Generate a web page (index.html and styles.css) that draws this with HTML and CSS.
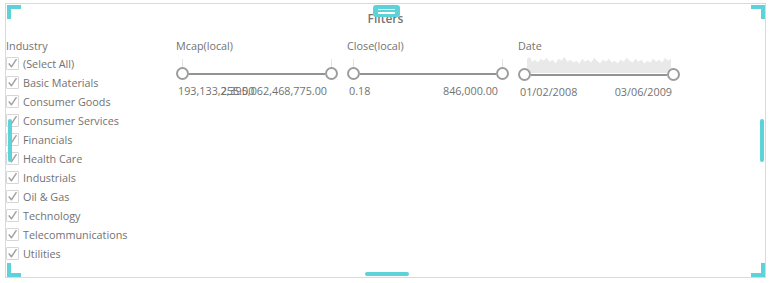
FILE: index.html
```html
<!DOCTYPE html>
<html lang="en">
  <head>
    <meta charset="UTF-8" />
    <meta name="viewport" content="width=device-width, initial-scale=1.0" />
    <title>Filters</title>
    <link rel="stylesheet" href="styles.css">
  </head>

  <body>
    <div class="widget">
      <div class="title">Filters</div>

      <div class="filters">
        <div class="list">
          <div class="list-label">Industry</div>
          <div class="item"><span class="check"><svg viewBox="0 0 13 13"><path d="M2.6 7 L5.2 10.4 L10.8 2" /></svg></span>(Select All)</div>
          <div class="item"><span class="check"><svg viewBox="0 0 13 13"><path d="M2.6 7 L5.2 10.4 L10.8 2" /></svg></span>Basic Materials</div>
          <div class="item"><span class="check"><svg viewBox="0 0 13 13"><path d="M2.6 7 L5.2 10.4 L10.8 2" /></svg></span>Consumer Goods</div>
          <div class="item"><span class="check"><svg viewBox="0 0 13 13"><path d="M2.6 7 L5.2 10.4 L10.8 2" /></svg></span>Consumer Services</div>
          <div class="item"><span class="check"><svg viewBox="0 0 13 13"><path d="M2.6 7 L5.2 10.4 L10.8 2" /></svg></span>Financials</div>
          <div class="item"><span class="check"><svg viewBox="0 0 13 13"><path d="M2.6 7 L5.2 10.4 L10.8 2" /></svg></span>Health Care</div>
          <div class="item"><span class="check"><svg viewBox="0 0 13 13"><path d="M2.6 7 L5.2 10.4 L10.8 2" /></svg></span>Industrials</div>
          <div class="item"><span class="check"><svg viewBox="0 0 13 13"><path d="M2.6 7 L5.2 10.4 L10.8 2" /></svg></span>Oil &amp; Gas</div>
          <div class="item"><span class="check"><svg viewBox="0 0 13 13"><path d="M2.6 7 L5.2 10.4 L10.8 2" /></svg></span>Technology</div>
          <div class="item"><span class="check"><svg viewBox="0 0 13 13"><path d="M2.6 7 L5.2 10.4 L10.8 2" /></svg></span>Telecommunications</div>
          <div class="item"><span class="check"><svg viewBox="0 0 13 13"><path d="M2.6 7 L5.2 10.4 L10.8 2" /></svg></span>Utilities</div>
        </div>

        <div class="range">
          <div class="range-label">Mcap(local)</div>
          <div class="spark ticks"><span class="tick"></span><span class="tick"></span></div>
          <div class="track"><span class="knob"></span><span class="line"></span><span class="knob"></span></div>
          <div class="values"><span class="lo">193,133,255.00</span><span class="hi">2,395,062,468,775.00</span></div>
        </div>

        <div class="range">
          <div class="range-label">Close(local)</div>
          <div class="spark ticks"><span class="tick"></span><span class="tick"></span></div>
          <div class="track"><span class="knob"></span><span class="line"></span><span class="knob"></span></div>
          <div class="values"><span class="lo">0.18</span><span class="hi">846,000.00</span></div>
        </div>

        <div class="range">
          <div class="range-label">Date</div>
          <div class="spark">
            <svg class="area" viewBox="0 0 146 19" preserveAspectRatio="none">
              <polygon points="0,19 0,4 3,2 5,7 8,5 11,8 14,4 17,6 20,3 23,7 26,5 29,9 32,4 35,6 38,2 41,7 44,5 47,8 50,6 53,9 56,4 59,7 62,5 65,8 68,3 71,6 74,9 77,5 80,7 83,4 86,8 89,6 92,9 95,5 98,7 101,3 104,6 107,8 110,4 113,7 116,5 119,9 122,6 125,8 128,4 131,7 134,5 137,8 140,3 143,6 146,4 146,19" />
            </svg>
          </div>
          <div class="track"><span class="knob"></span><span class="line"></span><span class="knob"></span></div>
          <div class="values date"><span class="lo">01/02/2008</span><span class="hi">03/06/2009</span></div>
        </div>
      </div>

      <!-- selection handles -->
      <span class="corner tl"></span>
      <span class="corner tr"></span>
      <span class="corner bl"></span>
      <span class="corner br"></span>
      <span class="handle top"><i></i><i></i></span>
      <span class="handle bottom"></span>
      <span class="handle left"></span>
      <span class="handle right"></span>
    </div>
  </body>
</html>
```

FILE: styles.css
```css
body {
  margin: 0;
  font-family: "Open Sans", Arial, sans-serif;
  font-size: 10.8px;
  color: #727272;
  background-color: #fff;
}

.widget {
  position: relative;
  box-sizing: border-box;
  margin: 3px 0 0 5px;
  width: 761px;
  height: 275px;
  border: 1px solid #b2eaee;
}

.title {
  padding-top: 7px;
  line-height: 15px;
  height: 15px;
  text-align: center;
  font-size: 12px;
  font-weight: 600;
  color: #757575;
}

.filters {
  display: flex;
  gap: 9px;
  padding-top: 11px;
}

.list {
  width: 161px;
}

.list-label,
.range-label {
  height: 17px;
  line-height: 17px;
}

.item {
  display: flex;
  align-items: center;
  gap: 4px;
  height: 19px;
  white-space: nowrap;
}

.check {
  box-sizing: border-box;
  width: 13px;
  height: 13px;
  border: 1px solid #d6d6d6;
  border-radius: 1px;
  flex: none;
}

.check svg {
  display: block;
  width: 11px;
  height: 11px;
  overflow: visible;
  fill: none;
  stroke: #a3a3a3;
  stroke-width: 1.8;
  stroke-linecap: round;
  stroke-linejoin: round;
}

.range {
  width: 162px;
}

.spark {
  height: 13px;
}

.ticks {
  display: flex;
  justify-content: space-between;
  align-items: flex-end;
  padding: 0 6px;
}

.tick {
  width: 1px;
  height: 8px;
  background-color: #e4e4e4;
}

.area {
  display: block;
  margin-left: 9px;
  width: 144px;
  height: 18px;
  margin-top: 1px;
  fill: #e9e9e9;
}

.track {
  position: relative;
  display: flex;
  align-items: center;
  height: 13px;
}

.knob {
  box-sizing: border-box;
  width: 13px;
  height: 13px;
  border: 2px solid #9d9d9d;
  border-radius: 50%;
  background-color: #fff;
  flex: none;
}

.line {
  flex: 1;
  height: 2px;
  background-color: #939393;
}

.values {
  display: grid;
  margin-top: 3px;
  padding: 0 11px 0 2px;
  line-height: 16px;
  white-space: nowrap;
}

.values span {
  grid-area: 1 / 1;
}

.values .hi {
  justify-self: end;
}

.values.date {
  padding-right: 8px;
}

/* selection chrome */
.corner {
  position: absolute;
  width: 14px;
  height: 14px;
  border: 0 solid #5dd3d9;
  box-sizing: border-box;
}
.corner.tl {
  top: 1px;
  left: 1px;
  border-top-width: 4px;
  border-left-width: 4px;
}
.corner.tr {
  top: 1px;
  right: 0;
  border-top-width: 4px;
  border-right-width: 4px;
}
.corner.bl {
  bottom: 0;
  left: 1px;
  border-bottom-width: 4px;
  border-left-width: 4px;
}
.corner.br {
  bottom: 0;
  right: 0;
  border-bottom-width: 4px;
  border-right-width: 4px;
}

.handle {
  position: absolute;
  background-color: #5dd3d9;
  border-radius: 2px;
}
.handle.top {
  top: 1px;
  left: 367px;
  width: 27px;
  height: 12px;
  border-radius: 3px;
  display: flex;
  flex-direction: column;
  justify-content: center;
  align-items: center;
  gap: 2px;
}
.handle.top i {
  width: 17px;
  height: 1.5px;
  background-color: #fff;
}
.handle.bottom {
  bottom: 1px;
  left: 359px;
  width: 44px;
  height: 4px;
}
.handle.left {
  top: 115px;
  left: 2px;
  width: 4px;
  height: 43px;
}
.handle.right {
  top: 115px;
  right: 1px;
  width: 4px;
  height: 43px;
}
```
